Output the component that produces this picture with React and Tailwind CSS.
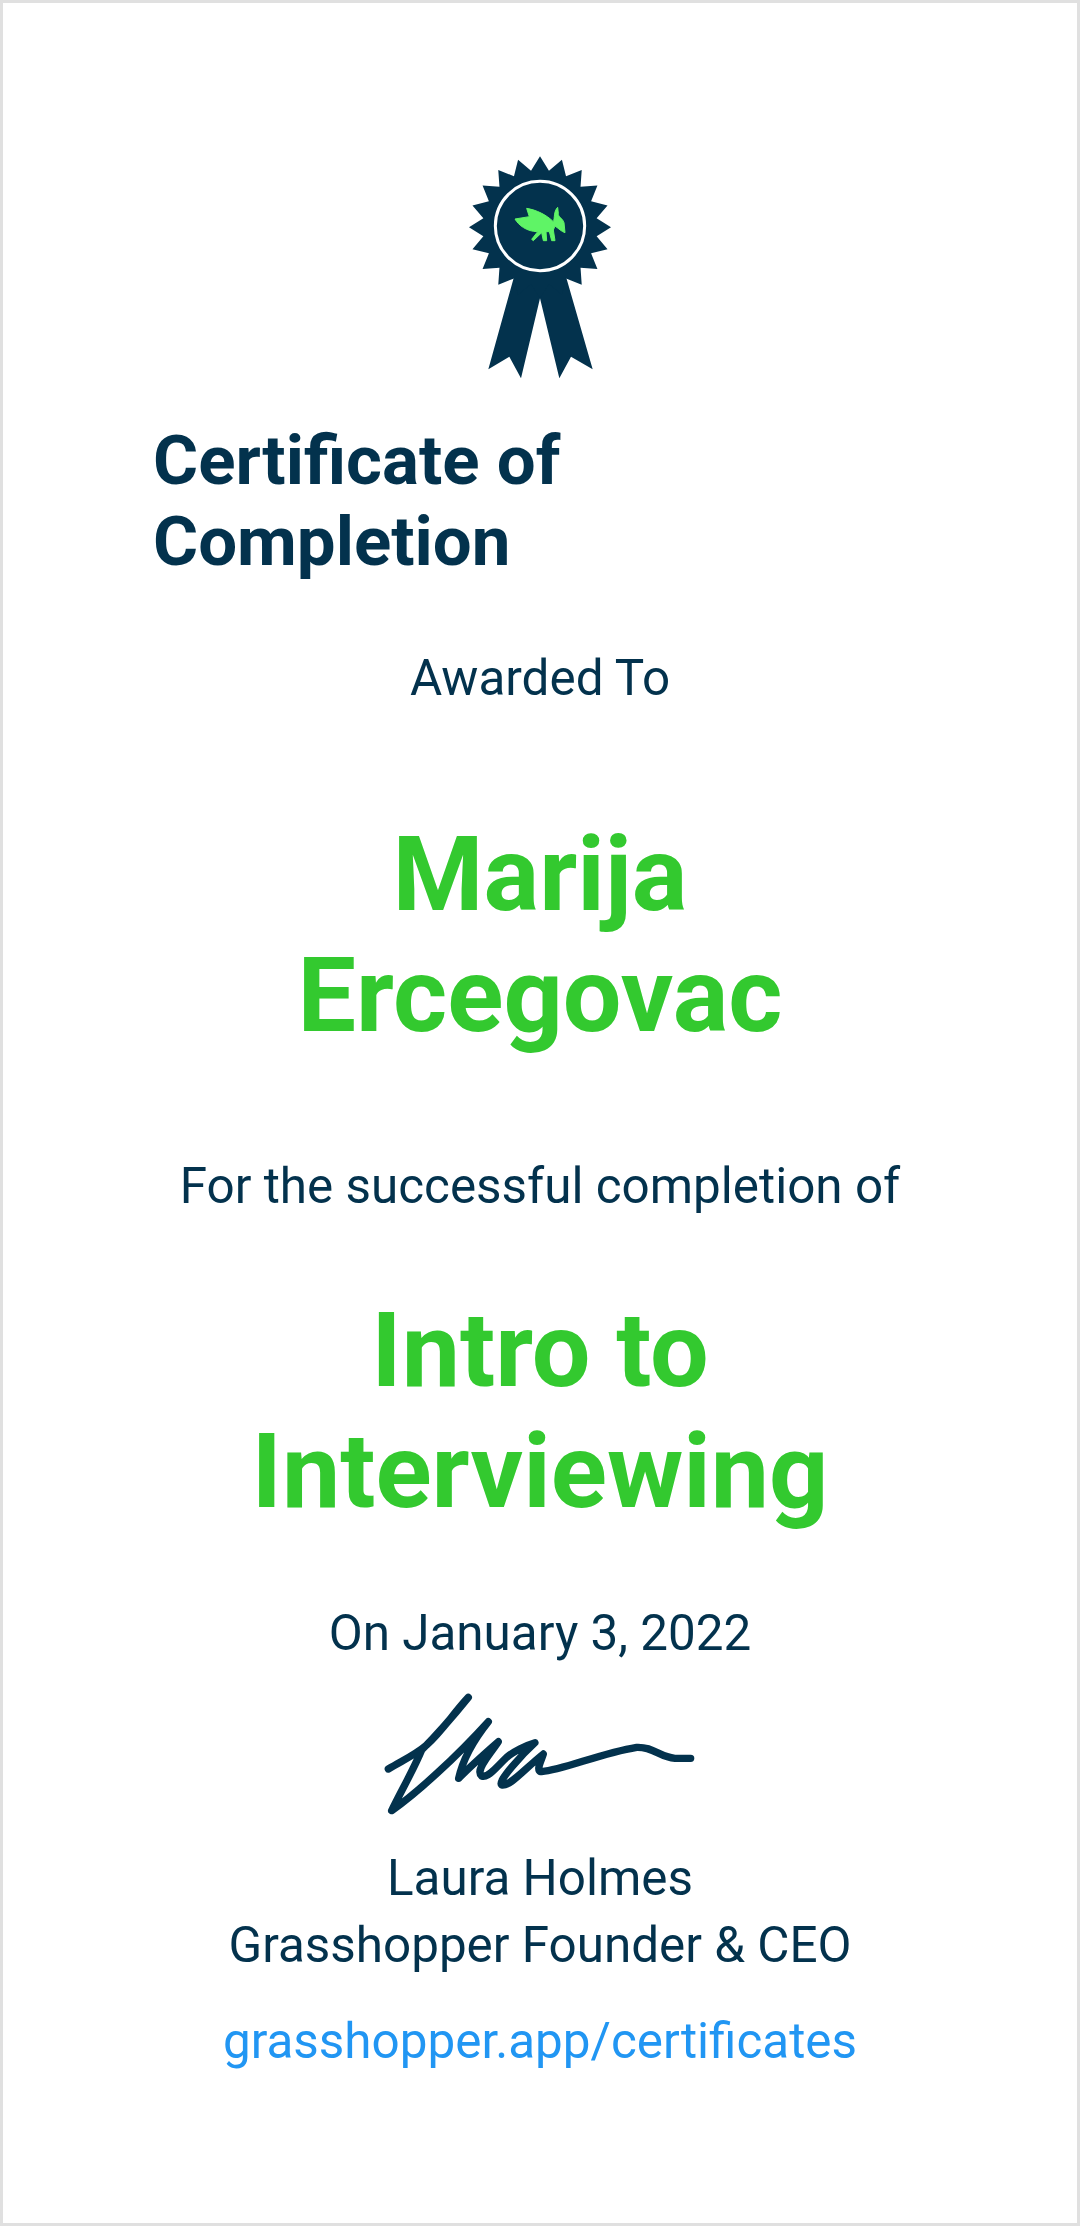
const star = [];
for (let i = 0; i < 40; i++) {
  const r = i % 2 === 0 ? 213 : 172;
  const a = (i * 9 * Math.PI) / 180;
  star.push(`${(300 + r * Math.sin(a)).toFixed(1)},${(262 - r * Math.cos(a)).toFixed(1)}`);
}

function Badge() {
  return (
    <svg width="200" height="250" viewBox="0 0 600 750" className="block mx-auto">
      <polygon fill="#03324d" points="225,400 145,688 208,650 243,715 300,475 358,715 393,650 458,688 375,400" />
      <polygon fill="#03324d" points={star.join(" ")} />
      <circle cx="300" cy="258" r="134" fill="none" stroke="#ffffff" strokeWidth="9" />
      <g transform="translate(150,150)">
        <path
          fill="#5ff466"
          stroke="#5ff466"
          strokeWidth="3"
          strokeLinejoin="round"
          d="M75 87 L118 80 L110 55 C140 60 170 75 190 95 C195 85 190 65 203 52 L205 70 C203 80 218 85 222 98 L225 128 C215 125 205 115 195 108 L190 120 L195 152 L185 152 L178 125 L168 125 L170 152 L160 152 L155 128 L130 152 L125 148 L143 125 C110 125 85 105 75 87Z"
        />
      </g>
    </svg>
  );
}

function Signature() {
  return (
    <svg width="350" height="170" viewBox="0 0 1050 510" className="block">
      <path
        fill="none"
        stroke="#03324d"
        strokeWidth="22"
        strokeLinecap="round"
        strokeLinejoin="round"
        d="M85 297 C130 270 165 255 200 225 C245 185 280 130 325 82 C270 150 225 200 185 240 C160 300 125 360 95 422 C170 370 290 260 385 155 C345 205 310 260 296 325 C330 290 375 250 415 215 C385 260 345 300 365 318 C385 325 410 290 440 262 C460 245 500 225 525 218 C490 250 410 335 425 345 C450 350 490 300 550 252 C545 270 525 305 545 305 C610 300 720 250 830 232 C880 230 900 262 945 265 L992 265"
      />
    </svg>
  );
}

export default function App() {
  return (
    <div className="w-[1080px] h-[2226px] border-[3px] border-[#e0e0e0] bg-white text-[#03324d] font-['Roboto',sans-serif] pt-[137px]">
      <Badge />
      <h1 className="ml-[150px] mt-[30px] w-[500px] text-[69px] leading-[81px] font-bold">Certificate of Completion</h1>
      <p className="mt-[66px] text-center text-[49.4px] leading-[60px]">Awarded To</p>
      <h2 className="mt-[106px] text-center text-[104px] leading-[121px] font-bold text-[#33c92f] px-[200px]">Marija Ercegovac</h2>
      <p className="mt-[100px] text-center text-[49.4px] leading-[60px]">For the successful completion of</p>
      <h2 className="mt-[74px] text-center text-[104px] leading-[121px] font-bold text-[#33c92f] px-[200px]">Intro to Interviewing</h2>
      <p className="mt-[71px] text-center text-[49.4px] leading-[60px]">On January 3, 2022</p>
      <div className="mt-[7px] flex justify-center pr-[10px]"><Signature /></div>
      <p className="mt-[5px] text-center text-[49.4px] leading-[67px]">Laura Holmes<br />Grasshopper Founder &amp; CEO</p>
      <p className="mt-[32px] text-center text-[49.4px] leading-[60px] text-[#2196f3]">grasshopper.app/certificates</p>
    </div>
  );
}
